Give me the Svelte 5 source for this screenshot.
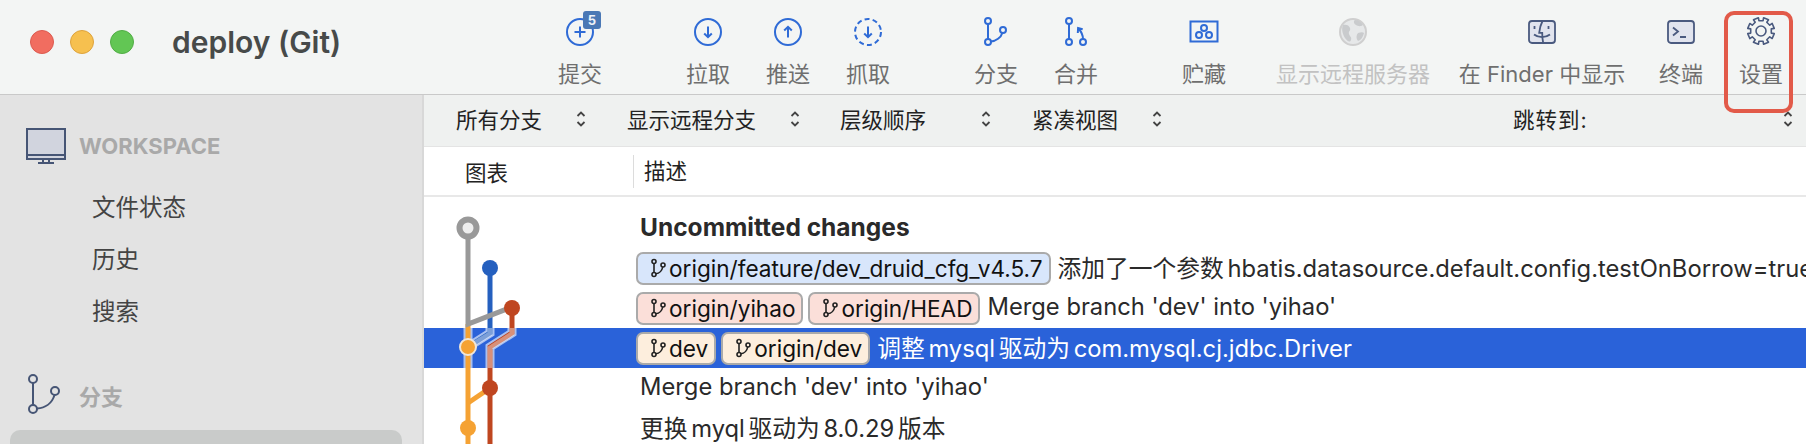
<script>
const filters = [
	{ label: '所有分支', cls: 'f1' },
	{ label: '显示远程分支', cls: 'f2' },
	{ label: '层级顺序', cls: 'f3' },
	{ label: '紧凑视图', cls: 'f4' }
];

const rows = [
	{ text: 'Uncommitted changes', bold: true, chips: [] },
	{
		text: '添加了一个参数 hbatis.datasource.default.config.testOnBorrow=true',
		tight: true,
		chips: [{ name: 'origin/feature/dev_druid_cfg_v4.5.7', tone: 'blue' }]
	},
	{
		text: "Merge branch 'dev' into 'yihao'",
		chips: [
			{ name: 'origin/yihao', tone: 'red' },
			{ name: 'origin/HEAD', tone: 'red' }
		]
	},
	{
		text: '调整 mysql 驱动为 com.mysql.cj.jdbc.Driver',
		selected: true,
		tight: true,
		chips: [
			{ name: 'dev', tone: 'orange' },
			{ name: 'origin/dev', tone: 'orange' }
		]
	},
	{ text: "Merge branch 'dev' into 'yihao'", chips: [] },
	{ text: '更换 myql 驱动为 8.0.29 版本', tight: true, chips: [] }
];

// 8 toothed gear outline
function gearPath(cx, cy, outer, inner) {
	let d = '';
	const n = 8;
	for (let i = 0; i < n; i++) {
		const a = (i / n) * Math.PI * 2 + Math.PI / 8;
		const w = 0.2;
		const s = Math.PI / n;
		const pts = [
			[inner, a - s + w],
			[outer, a - w],
			[outer, a + w],
			[inner, a + s - w]
		];
		pts.forEach(([r, t], j) => {
			const x = (cx + r * Math.cos(t)).toFixed(2);
			const y = (cy + r * Math.sin(t)).toFixed(2);
			d += (i === 0 && j === 0 ? 'M' : 'L') + x + ' ' + y + ' ';
		});
	}
	return d + 'Z';
}
</script>

{#snippet chipIcon()}
	<svg class="chip-icon" viewBox="0 0 16 20" fill="none" stroke="#222" stroke-width="1.6">
		<circle cx="4" cy="3.5" r="2" />
		<circle cx="4" cy="16.5" r="2" />
		<circle cx="13" cy="7" r="2" />
		<path d="M4 5.5v9M5.8 15.8c3.6-.6 6.4-3.6 6.9-6.8" />
	</svg>
{/snippet}

{#snippet sort()}
	<svg class="sort" viewBox="0 0 10 18" fill="none" stroke="#444" stroke-width="1.8">
		<path d="M1.5 6L5 2.5 8.5 6M1.5 12L5 15.5 8.5 12" />
	</svg>
{/snippet}

{#snippet tool(label, cls = '')}
	<div class="tool {cls}">
		<div class="tool-icon">
			{#if label === '提交'}
				<svg viewBox="0 0 30 30" class="blue">
					<circle cx="15" cy="15" r="13" />
					<path d="M15 9.5v11M9.5 15h11" />
				</svg>
				<span class="badge">5</span>
			{:else if label === '拉取'}
				<svg viewBox="0 0 30 30" class="blue">
					<circle cx="15" cy="15" r="13" />
					<path d="M15 9.5v10.5M11.2 16.5L15 20.2l3.8-3.7" />
				</svg>
			{:else if label === '推送'}
				<svg viewBox="0 0 30 30" class="blue">
					<circle cx="15" cy="15" r="13" />
					<path d="M15 20.5V10M11.2 13.5L15 9.8l3.8 3.7" />
				</svg>
			{:else if label === '抓取'}
				<svg viewBox="0 0 30 30" class="blue">
					<circle cx="15" cy="15" r="13" stroke-dasharray="5 3.2" />
					<path d="M15 9.5v10.5M11.2 16.5L15 20.2l3.8-3.7" />
				</svg>
			{:else if label === '分支'}
				<svg viewBox="0 0 30 30" class="blue">
					<circle cx="7" cy="4" r="3" />
					<circle cx="7" cy="25" r="3" />
					<circle cx="22" cy="13" r="3" />
					<path d="M7 7v15M10 24.5c5-.5 10-4 11.3-8.600" />
				</svg>
			{:else if label === '合并'}
				<svg viewBox="0 0 30 30" class="blue">
					<circle cx="8" cy="4" r="3" />
					<circle cx="8" cy="25" r="3" />
					<circle cx="22" cy="25" r="3" />
					<path d="M8 7v15M22 22c0-4-1.500-7-4.500-10.500M16.800 16l.3-5 4.600 1.200" />
				</svg>
			{:else if label === '贮藏'}
				<svg viewBox="0 0 30 30" class="blue">
					<rect x="1.500" y="4.500" width="27" height="20" />
					<circle cx="15" cy="11" r="3" />
					<circle cx="10" cy="18" r="3" />
					<circle cx="20" cy="18" r="3" />
				</svg>
			{:else if label === '显示远程服务器'}
				<svg viewBox="0 0 30 30" class="globe">
					<circle cx="15" cy="15" r="13" />
					<path class="land" d="M5 8c3-1 6 0 7 3s-2 3-1 6 3 3 2 6-4 1-6-2-4-9-2-13zM17 3c4 0 6 2 8 5-3 2-5 1-7 0s-3-4-1-5zM20 16c3-1 5-1 6 0-1 4-3 7-6 8-2-2-2-6 0-8z" />
				</svg>
			{:else if label === '在 Finder 中显示'}
				<svg viewBox="0 0 30 30" class="slate">
					<rect x="2" y="4" width="26" height="22" rx="3" />
					<path d="M15.500 4c-2 4-3 8-3.300 11.800h3c0 3.500.3 7 1 10.200M7.500 9v3M21.500 9v3M7 17.500c4.500 3.500 11.500 3.500 16 0" />
				</svg>
			{:else if label === '终端'}
				<svg viewBox="0 0 30 30" class="slate">
					<rect x="2" y="4" width="26" height="22" rx="3" />
					<path d="M7 10.500l5 4-5 4M14 20h6" />
				</svg>
			{:else}
				<svg viewBox="0 0 30 30" class="gear">
					<path d={gearPath(15, 14, 13.500, 10.500)} />
					<circle cx="15" cy="14" r="5" />
				</svg>
			{/if}
		</div>
		<span class="tool-label">{label}</span>
	</div>
{/snippet}

<div class="window">
	<header class="toolbar">
		<div class="lights">
			<span class="light red"></span>
			<span class="light yellow"></span>
			<span class="light green"></span>
		</div>
		<h1 class="title">deploy (Git)</h1>
		<div class="tools">
			{@render tool('提交')}
			<div class="group">
				{@render tool('拉取')}
				{@render tool('推送')}
				{@render tool('抓取')}
			</div>
			<div class="group">
				{@render tool('分支')}
				{@render tool('合并')}
			</div>
			<div class="group">
				{@render tool('贮藏')}
			</div>
			{@render tool('显示远程服务器', 'remote')}
			{@render tool('在 Finder 中显示', 'finder')}
			{@render tool('终端', 'terminal')}
			{@render tool('设置')}
		</div>
		<div class="highlight"></div>
	</header>

	<div class="body">
		<aside class="sidebar">
			<div class="section first">
				<svg class="section-icon" viewBox="0 0 40 36" fill="none" stroke="#465575" stroke-width="2">
					<rect x="1" y="1" width="38" height="30" fill="#d1d4de" />
					<path d="M1 27h38M17 31v3M23 31v3M12 35h16" />
				</svg>
				<span>WORKSPACE</span>
			</div>
			<nav class="nav">
				<div>文件状态</div>
				<div>历史</div>
				<div>搜索</div>
			</nav>
			<div class="section second">
				<svg class="section-icon" viewBox="0 0 40 42" fill="none" stroke="#465575" stroke-width="2">
					<circle cx="9" cy="5" r="4" />
					<circle cx="9" cy="35" r="4" />
					<circle cx="31" cy="17" r="4" />
					<path d="M9 9v22M13 34.500c8-.5 15-5 17.500-13.500" />
				</svg>
				<span>分支</span>
			</div>
			<div class="current"></div>
		</aside>

		<main class="main">
			<div class="filters">
				{#each filters as f}
					<div class="filter {f.cls}">
						<span>{f.label}</span>
						{@render sort()}
					</div>
				{/each}
				<div class="jump">跳转到:</div>
				{@render sort()}
			</div>

			<div class="columns">
				<div class="col-graph">图表</div>
				<div class="col-desc">描述</div>
			</div>

			<div class="list">
				{#each rows as row}
					<div class="row" class:selected={row.selected}>
						{#each row.chips as chip}
							<span class="chip {chip.tone}">
								{@render chipIcon()}
								{chip.name}
							</span>
						{/each}
						<span class="msg" class:bold={row.bold} class:tight={row.tight} class:has-chips={row.chips.length > 0}>{row.text}</span>
					</div>
				{/each}

				<svg class="graph" viewBox="0 0 210 236" fill="none">
					<path class="halo" d="M44 20v96M44 116l44-17M66 60v65L44 139M88 99v26l-22 14v97M44 116v120M66 180l-22 15" />
					<path d="M66 60v65L44 139" stroke="#2560bf" stroke-width="5" />
					<path d="M88 99v26l-22 14v97" stroke="#bf4620" stroke-width="5" />
					<path d="M44 116v120" stroke="#f5a233" stroke-width="5" />
					<path d="M66 180l-22 15" stroke="#f5a233" stroke-width="5" />
					<path d="M44 20v96l44-17" stroke="#999" stroke-width="5" />
					<path d="M66 120v6L48 137" stroke="#fff" stroke-opacity=".4" stroke-width="5" />
					<path d="M88 120v6l-22 14v20" stroke="#fff" stroke-opacity=".4" stroke-width="5" />
					<circle cx="44" cy="20" r="8.500" fill="#eee" stroke="#999" stroke-width="6" />
					<circle cx="66" cy="60" r="8" fill="#2560bf" />
					<circle cx="88" cy="100" r="8" fill="#bf4620" />
					<circle cx="44" cy="139" r="8" fill="#f5a233" stroke="#f0e6d8" stroke-width="2" />
					<circle cx="66" cy="180" r="8" fill="#bf4620" />
					<circle cx="44" cy="220" r="8" fill="#f5a233" />
				</svg>
			</div>
		</main>
	</div>
</div>

<style>
:global(body) {
	margin: 0;
	overflow: hidden;
	background: #fff;
}

.window {
	width: 1806px;
	height: 444px;
	overflow: hidden;
	font-family: Inter, "Noto Sans CJK SC", sans-serif;
	color: #2a2a2a;
}

.toolbar {
	position: relative;
	display: flex;
	box-sizing: border-box;
	height: 95px;
	background: #f3f5f4;
	border-bottom: 1px solid #c9c9c9;
}

.lights {
	display: flex;
	gap: 16px;
	padding: 30px 0 0 30px;
}

.light {
	box-sizing: border-box;
	width: 24px;
	height: 24px;
	border-radius: 50%;
}

.light.red {
	background: #f16d60;
	border: 1px solid #dc5a4f;
}

.light.yellow {
	background: #f6c04f;
	border: 1px solid #dea33c;
}

.light.green {
	background: #62c654;
	border: 1px solid #51ad45;
}

.title {
	margin: 0;
	padding: 24px 0 0 38px;
	font-size: 30px;
	font-weight: 600;
	line-height: 36px;
	color: #474a49;
}

.tools {
	display: flex;
	position: absolute;
	left: 540px;
	top: 0;
}

.group {
	display: flex;
	margin-left: 48px;
}

.tool {
	width: 80px;
	display: flex;
	flex-direction: column;
	align-items: center;
	padding-top: 17px;
}

.remote {
	width: 160px;
	margin-left: 29px;
}

.finder {
	width: 170px;
	margin-left: 24px;
}

.terminal {
	margin-left: 14px;
}

.tool-icon {
	position: relative;
	width: 30px;
	height: 30px;
}

.tool-icon svg {
	display: block;
	width: 30px;
	height: 30px;
	fill: none;
	overflow: visible;
}

.blue {
	stroke: #2f6bd6;
	stroke-width: 2;
}

.globe {
	stroke: #cfcfcf;
	stroke-width: 2;
}

.globe circle {
	fill: #e6e8e9;
}

.globe .land {
	fill: #c9cbcd;
	stroke: none;
}

.slate {
	stroke: #4a5a7f;
	stroke-width: 1.8;
}

.slate rect {
	fill: #e1e4ee;
}

.gear {
	stroke: #4a5a7f;
	stroke-width: 1.600;
	stroke-linejoin: round;
}

.badge {
	position: absolute;
	left: 18px;
	top: -6px;
	width: 18px;
	height: 18px;
	border-radius: 3px;
	background: #4a78b5;
	color: #eef2f8;
	font-size: 13px;
	font-weight: 700;
	line-height: 18px;
	text-align: center;
}

.tool-label {
	margin-top: 15px;
	font-size: 22px;
	line-height: 24px;
	color: #6f6f6f;
	white-space: nowrap;
}

.remote .tool-label {
	color: #c2c2c2;
}

.highlight {
	position: absolute;
	left: 1724px;
	top: 11px;
	box-sizing: border-box;
	width: 69px;
	height: 102px;
	border: 4px solid #e25a49;
	border-radius: 10px;
	z-index: 2;
}

.body {
	display: flex;
	height: 349px;
}

.sidebar {
	box-sizing: border-box;
	width: 424px;
	flex: none;
	background: #e3e3e3;
	border-right: 2px solid #d8d8d8;
	overflow: hidden;
}

.section {
	display: flex;
	align-items: center;
	gap: 13px;
	font-size: 22px;
	font-weight: 700;
	color: #a9a9a9;
}

.section-icon {
	display: block;
	flex: none;
	width: 40px;
	height: 36px;
}

.section.first {
	padding: 33px 0 0 26px;
}

.section.second {
	margin-top: 36px;
	padding-left: 24px;
}

.section.second .section-icon {
	height: 42px;
	margin-right: 2px;
}

.nav {
	padding: 18px 0 0 92px;
	font-size: 23.500px;
	color: #444;
}

.nav div {
	height: 52px;
	line-height: 52px;
}

.current {
	margin: 14px 0 0 10px;
	width: 392px;
	height: 60px;
	background: #c9cbca;
	border-radius: 10px;
}

.main {
	flex: 1;
	min-width: 0;
	overflow: hidden;
}

.filters {
	display: flex;
	align-items: center;
	box-sizing: border-box;
	height: 52px;
	padding: 0 13px 4px 32px;
	background: #eff1f0;
	border-bottom: 1px solid #e4e4e4;
	font-size: 21.500px;
	color: #222;
}

.filter {
	display: flex;
	align-items: center;
	justify-content: space-between;
	white-space: nowrap;
}

.f1 {
	width: 130px;
	margin-right: 41px;
}

.f2 {
	width: 173px;
	margin-right: 40px;
}

.f3 {
	width: 151px;
	margin-right: 41px;
}

.f4 {
	width: 130px;
}

.sort {
	display: block;
	width: 10px;
	height: 18px;
	flex: none;
}

.jump {
	margin: 0 auto 0 351px;
	letter-spacing: 1px;
}

.columns {
	display: flex;
	align-items: center;
	box-sizing: border-box;
	height: 50px;
	border-bottom: 2px solid #e8e8e8;
	font-size: 21.500px;
	color: #222;
}

.col-graph {
	width: 209px;
	padding-left: 41px;
	box-sizing: border-box;
}

.col-desc {
	height: 33px;
	line-height: 33px;
	padding-left: 10px;
	border-left: 1px solid #dcdcdc;
}

.list {
	position: relative;
	padding-top: 11px;
}

.graph {
	position: absolute;
	left: 0;
	top: 11px;
	width: 210px;
	height: 236px;
	pointer-events: none;
}

.halo {
	stroke: #fff;
	stroke-opacity: .6;
	stroke-width: 9;
}

.row {
	display: flex;
	align-items: center;
	gap: 5px;
	box-sizing: border-box;
	height: 40px;
	padding-left: 212px;
	font-size: 23.750px;
	white-space: nowrap;
	color: #2a2a2a;
}

.row.selected {
	background: #2a62d9;
	color: #fff;
}

.msg {
	padding: 0 0 3px 4px;
}

.msg.tight {
	word-spacing: -3px;
}

.msg.has-chips {
	padding-left: 2px;
}

.msg.bold {
	font-size: 24.500px;
	font-weight: 700;
}

.chip {
	display: inline-flex;
	align-items: center;
	gap: 3px;
	box-sizing: border-box;
	height: 33px;
	padding: 0 6px 0 12px;
	border: 2px solid #aaa;
	border-radius: 7px;
	color: #111;
	font-size: 22.600px;
}

.chip.blue {
	background: #d8e6fb;
}

.chip.red {
	background: #fbdfd9;
}

.chip.orange {
	background: #fdeedd;
}

.chip-icon {
	display: block;
	width: 16px;
	height: 20px;
	flex: none;
}
</style>
